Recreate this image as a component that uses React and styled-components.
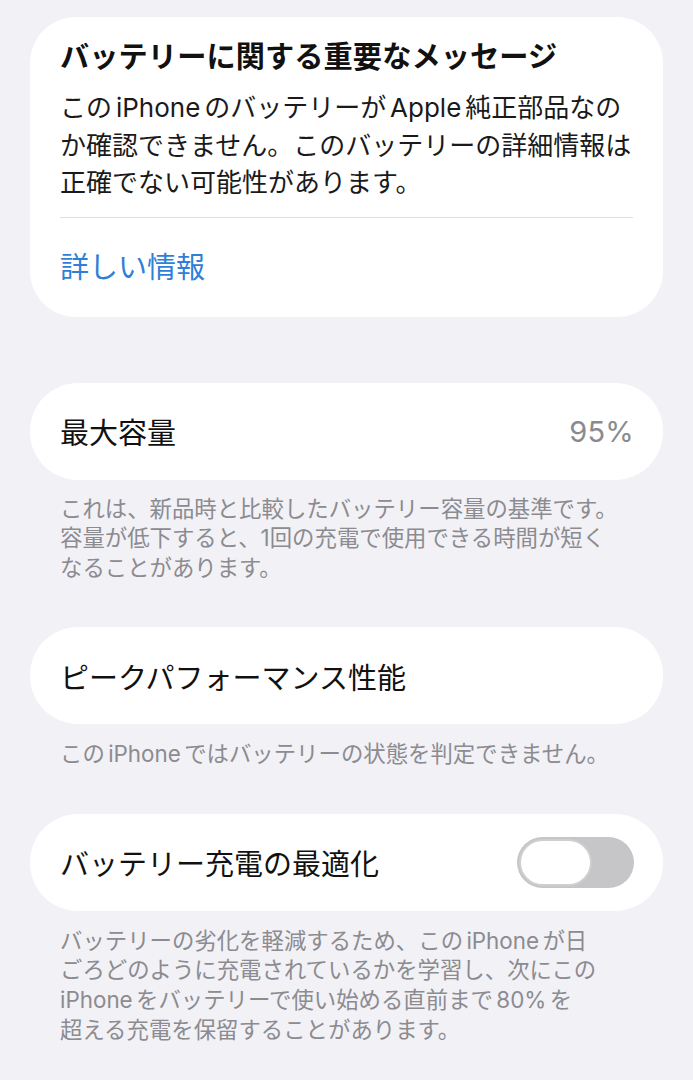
import React from "react";
import styled, { createGlobalStyle } from "styled-components";

const Global = createGlobalStyle`
  html, body {
    margin: 0;
    padding: 0;
    background: #f2f1f6;
  }
  body {
    font-family: Inter, "Noto Sans CJK JP", sans-serif;
    -webkit-font-smoothing: antialiased;
  }
`;

const Page = styled.div`
  width: 693px;
  min-height: 1080px;
  box-sizing: border-box;
  padding: 17px 30px 0 30px;
  display: flex;
  flex-direction: column;
`;

const Card = styled.section`
  background: #ffffff;
  border-radius: ${(p) => (p.$tall ? "46px" : "48px")};
  box-sizing: border-box;
  margin-top: ${(p) => p.$gap || 0}px;
`;

const NoticeCard = styled(Card)`
  padding: 21px 30px 30px 30px;
  display: flex;
  flex-direction: column;
`;

const NoticeTitle = styled.h2`
  margin: 0;
  font-size: 29.2px;
  line-height: 38px;
  font-weight: 700;
  color: #111;
  letter-spacing: 0.1px;
`;

const NoticeBody = styled.p`
  margin: 13px 0 0 0;
  font-size: 26px;
  line-height: 37.5px;
  color: #1a1a1a;
`;

/* Latin words inside Japanese text get a thin gap on either side */
const Latin = styled.span`
  margin-left: ${(p) => (p.$noLead ? 0 : "0.15em")};
  margin-right: ${(p) => (p.$noTrail ? 0 : "0.15em")};
`;

const Divider = styled.hr`
  border: 0;
  height: 1px;
  background: #dfdfe3;
  margin: 15px 0 0 0;
`;

const Link = styled.a`
  margin-top: 31px;
  font-size: 29px;
  line-height: 38px;
  color: #2f7fd8;
  text-decoration: none;
`;

const Row = styled(Card)`
  height: 97px;
  padding: 0 29px 0 30px;
  display: flex;
  align-items: center;
  justify-content: space-between;
`;

const RowLabel = styled.span`
  font-size: 29px;
  color: #111;
`;

const RowValue = styled.span`
  font-size: 29px;
  color: #8a8a8e;
  letter-spacing: 0.2px;
`;

const Footnote = styled.p`
  margin: ${(p) => p.$top || 15}px 0 0 0;
  padding: 0 30px;
  font-size: 22.4px;
  line-height: 29.6px;
  color: #8b8b90;
`;

const Track = styled.span`
  position: relative;
  width: 117px;
  height: 51px;
  border-radius: 26px;
  background: #c6c6c9;
  display: inline-block;
  flex-shrink: 0;
`;

const Knob = styled.span`
  position: absolute;
  left: 2px;
  top: 2px;
  width: 69px;
  height: 43px;
  border-radius: 24px;
  background: #ffffff;
  border: 2px solid #cfcfd2;
`;

const Toggle = () => (
  <Track role="switch" aria-checked="false">
    <Knob />
  </Track>
);

export default function App() {
  return (
    <>
      <Global />
      <Page>
        <NoticeCard $tall>
          <NoticeTitle>バッテリーに関する重要なメッセージ</NoticeTitle>
          <NoticeBody>
            この<Latin>iPhone</Latin>のバッテリーが<Latin>Apple</Latin>純正部品なの
            <br />
            か確認できません。このバッテリーの詳細情報は
            <br />
            正確でない可能性があります。
          </NoticeBody>
          <Divider />
          <Link href="#">詳しい情報</Link>
        </NoticeCard>

        <Row $gap={66}>
          <RowLabel>最大容量</RowLabel>
          <RowValue>95%</RowValue>
        </Row>
        <Footnote $top={14}>
          これは、新品時と比較したバッテリー容量の基準です。
          <br />
          容量が低下すると、1回の充電で使用できる時間が短く
          <br />
          なることがあります。
        </Footnote>

        <Row $gap={45}>
          <RowLabel>ピークパフォーマンス性能</RowLabel>
        </Row>
        <Footnote>
          この<Latin>iPhone</Latin>ではバッテリーの状態を判定できません。
        </Footnote>

        <Row $gap={45}>
          <RowLabel>バッテリー充電の最適化</RowLabel>
          <Toggle />
        </Row>
        <Footnote>
          バッテリーの劣化を軽減するため、この<Latin>iPhone</Latin>が日
          <br />
          ごろどのように充電されているかを学習し、次にこの
          <br />
          <Latin $noLead>iPhone</Latin>をバッテリーで使い始める直前まで<Latin>80%</Latin>を
          <br />
          超える充電を保留することがあります。
        </Footnote>
      </Page>
    </>
  );
}
